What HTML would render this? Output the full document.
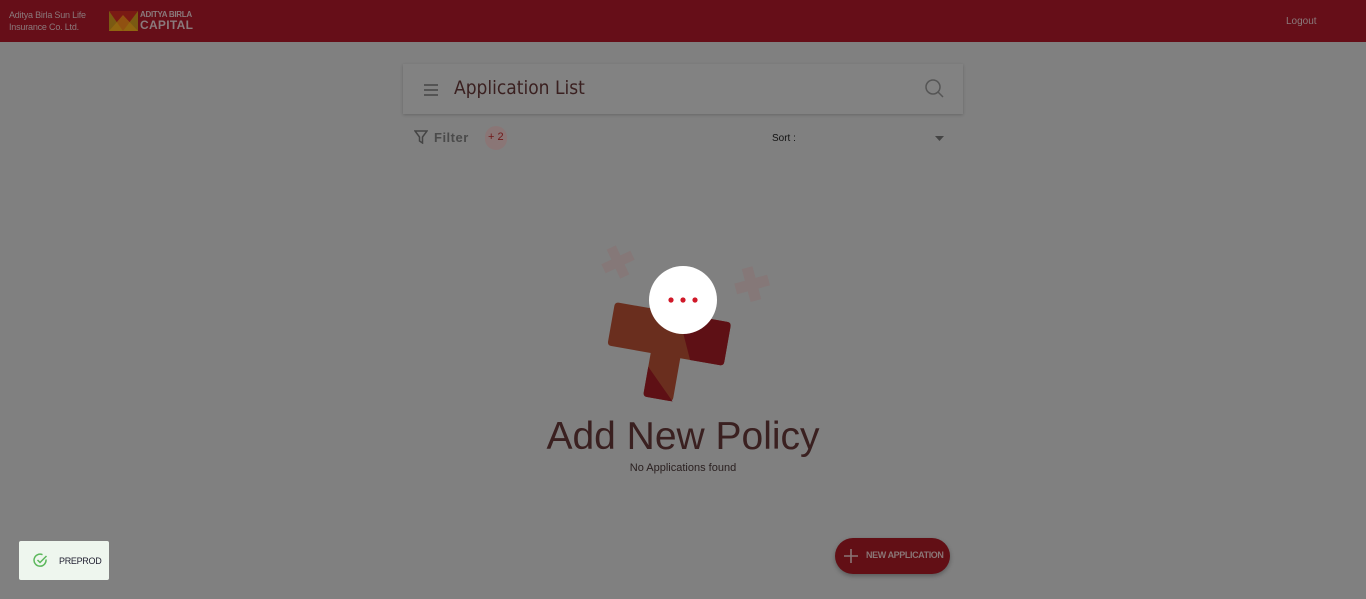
<!DOCTYPE html>
<html><head><meta charset="utf-8"><style>
*{margin:0;padding:0;box-sizing:border-box}
body{width:1366px;height:599px;background:#808080;font-family:"Liberation Sans",sans-serif;position:relative;overflow:hidden}
.hdr{position:absolute;left:0;top:0;width:1366px;height:42px;background:#660e18}
.t{position:absolute;white-space:nowrap}
</style></head><body>
<div class="hdr"></div>
<div class="t" style="left:9px;top:9px;font-size:9px;line-height:12px;color:#8a7a7c;letter-spacing:-0.2px">Aditya Birla Sun Life<br>Insurance Co. Ltd.</div>
<svg class="t" style="left:109px;top:11px" width="29" height="20"><rect width="29" height="20" fill="#7a5a12"/><path d="M0 0L14 20L29 0Z" fill="#7a1a14"/><path d="M0 20L14 4L29 20Z" fill="#9a6a10" opacity=".7"/></svg>
<div class="t" style="left:140px;top:10px;font-size:8px;font-weight:bold;color:#8a7a7c;letter-spacing:-0.3px">ADITYA BIRLA</div>
<div class="t" style="left:140px;top:18px;font-size:12px;font-weight:bold;color:#8a7a7c;letter-spacing:0.3px">CAPITAL</div>
<div class="t" style="left:1286px;top:16px;font-size:10px;color:#8a7a7c">Logout</div>

<div style="position:absolute;left:403px;top:64px;width:560px;height:50px;background:#828282;box-shadow:0 1px 3px rgba(0,0,0,.2)"></div>
<svg class="t" style="left:423px;top:83px" width="16" height="14"><path d="M1 2H15M1 7H15M1 12H15" stroke="#444" stroke-width="1.5"/></svg>
<div class="t" style="left:454px;top:77px;font-size:19px;color:#3a2020;font-family:'DejaVu Sans Condensed','Liberation Sans',sans-serif">Application List</div>
<svg class="t" style="left:924px;top:78px" width="22" height="22"><circle cx="9" cy="9" r="7" fill="none" stroke="#555" stroke-width="1.5"/><path d="M14 14L19 19" stroke="#555" stroke-width="1.5"/></svg>

<svg class="t" style="left:414px;top:130px" width="14" height="14"><path d="M1 1H13L8.5 7V13L5.5 11V7Z" fill="none" stroke="#444" stroke-width="1.5"/></svg>
<div class="t" style="left:434px;top:130px;font-size:13px;color:#4a4a4a;font-weight:bold;letter-spacing:.5px">Filter</div>
<div style="position:absolute;left:485px;top:126px;width:22px;height:24px;border-radius:11px;background:#8a7676"></div>
<div class="t" style="left:488px;top:131px;font-size:11px;color:#701818">+ 2</div>
<div class="t" style="left:772px;top:133px;font-size:10px;color:#111">Sort :</div>
<svg class="t" style="left:935px;top:136px" width="10" height="6"><path d="M0 0H9L4.5 5Z" fill="#444"/></svg>

<svg class="t" style="left:595px;top:240px" width="190" height="165">
<g transform="rotate(-25 23 22)" fill="#857878"><rect x="7" y="17" width="32" height="10"/><rect x="18" y="6" width="10" height="32"/></g>
<g transform="rotate(-15 157 44)" fill="#857878"><rect x="140" y="39" width="34" height="11"/><rect x="151" y="27" width="11" height="34"/></g>
<g transform="rotate(10 75 90)">
<path d="M18 72H130Q134 72 134 76V112Q134 116 130 116H90V156Q90 160 86 160H64Q60 160 60 156V116H20Q16 116 16 112V76Q16 72 20 72Z" fill="#6a2e1e"/>
<path d="M80 72H130Q134 72 134 76V112Q134 116 130 116H100Z" fill="#5e1015"/>
<path d="M60 130L90 160H64Q60 160 60 156Z" fill="#5e1015"/>
</g>
<circle cx="88" cy="60" r="34" fill="#fff"/>
<circle cx="76" cy="60" r="2.6" fill="#d01828"/><circle cx="88" cy="60" r="2.6" fill="#d01828"/><circle cx="100" cy="60" r="2.6" fill="#d01828"/>
</svg>

<div class="t" style="left:0;width:1366px;text-align:center;top:415px;font-size:39px;color:#3a2020;font-family:'Liberation Sans',sans-serif">Add New Policy</div>
<div class="t" style="left:0;width:1366px;text-align:center;top:462px;font-size:11px;color:#2a2020">No Applications found</div>

<div style="position:absolute;left:835px;top:538px;width:115px;height:36px;border-radius:18px;background:#620f15;box-shadow:0 2px 5px rgba(0,0,0,.3)"></div>
<svg class="t" style="left:844px;top:549px" width="14" height="14"><path d="M7 0V14M0 7H14" stroke="#8a7676" stroke-width="1.6"/></svg>
<div class="t" style="left:866px;top:550px;font-size:9px;font-weight:bold;color:#8a7676;letter-spacing:-.4px">NEW APPLICATION</div>

<div style="position:absolute;left:19px;top:541px;width:90px;height:39px;background:#eef6ee;border-radius:2px"></div>
<svg class="t" style="left:33px;top:553px" width="15" height="15"><path d="M13 6.5A6 6 0 1 1 9.5 1.7" fill="none" stroke="#5cb85c" stroke-width="1.5"/><path d="M4.5 7L7 9.5L13.5 3" fill="none" stroke="#5cb85c" stroke-width="1.5"/></svg>
<div class="t" style="left:59px;top:556px;font-size:9px;color:#223;letter-spacing:-.3px">PREPROD</div>
</body></html>
